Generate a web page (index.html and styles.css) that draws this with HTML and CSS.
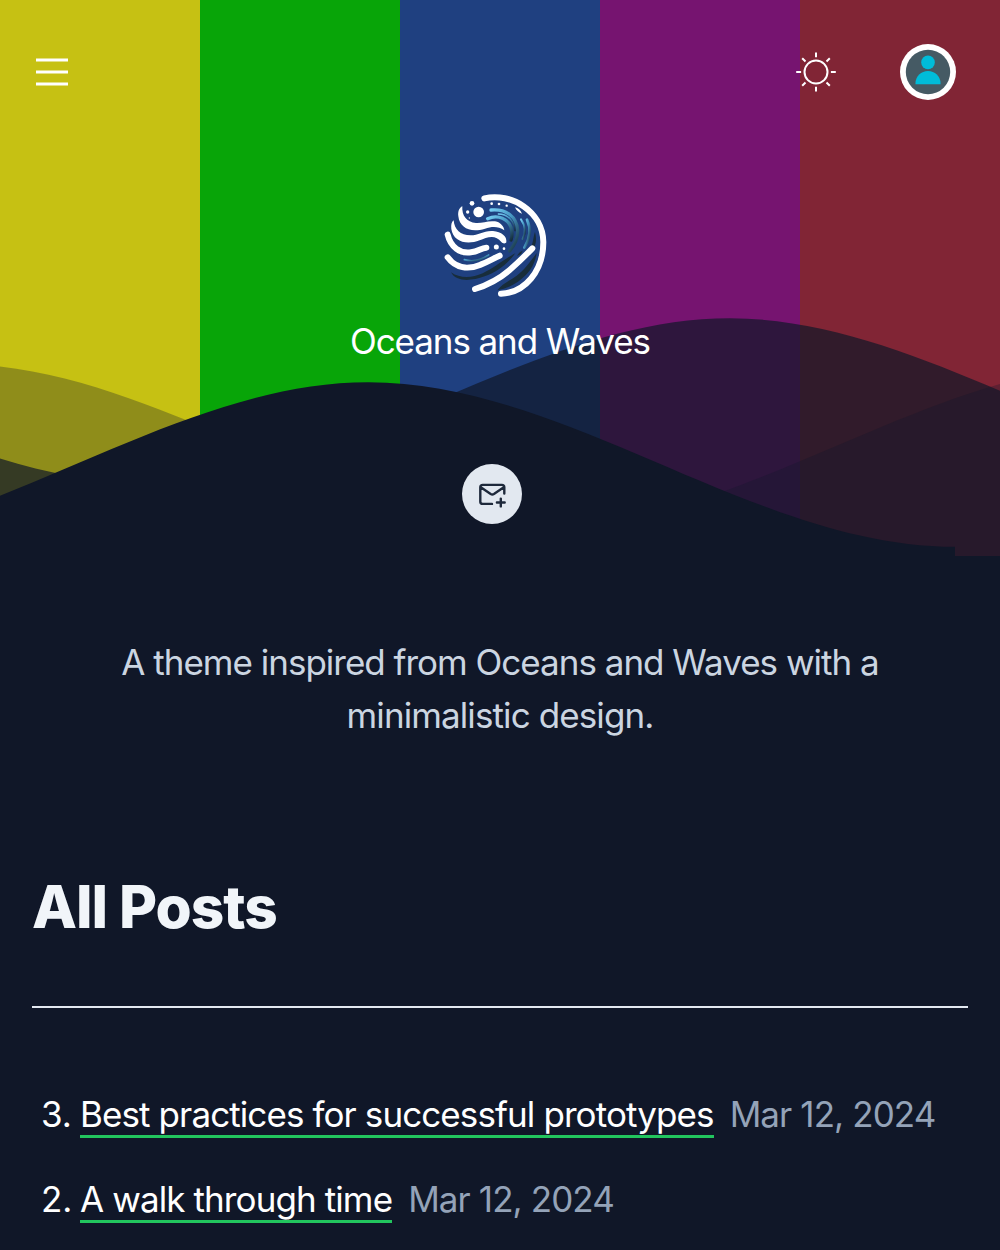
FILE: index.html
```html
<!DOCTYPE html>
<html lang="en">
<head>
<meta charset="utf-8">
<title>Oceans and Waves</title>
<link rel="stylesheet" href="styles.css">
</head>
<body>
<header class="hero">
  <svg class="waves" viewBox="0 24 150 28" preserveAspectRatio="none" aria-hidden="true">
    <defs><path id="wave" d="M-160 44c30 0 58-18 88-18s58 18 88 18 58-18 88-18 58 18 88 18v44h-352z"/></defs>
    <use href="#wave" x="5.5" y="0" opacity=".7"/>
    <use href="#wave" class="wave-light" x="65.3" y="5" opacity=".3"/>
    <use href="#wave" x="-48.75" y="7"/>
  </svg>
  <nav class="bar">
    <button class="icon-button" aria-label="Menu">
      <svg width="32" height="32" viewBox="0 0 32 32" fill="none" stroke="#fff" stroke-width="3"><path d="M0 4h32M0 16h32M0 28h32"/></svg>
    </button>
    <div class="actions">
      <button class="icon-button" aria-label="Theme">
        <svg width="40" height="40" viewBox="0 0 40 40" fill="none" stroke="#fff" stroke-width="2"><circle cx="20" cy="20" r="11.5"/><path d="M20 .5v4.7M20 34.8v4.7M.2 20h4.9M34.9 20h4.9M6.2 6.2l3.3 3.3M30.5 30.5l3.3 3.3M33.8 6.2l-3.3 3.3M9.5 30.5l-3.3 3.3"/></svg>
      </button>
      <button class="icon-button" aria-label="Account">
        <svg width="56" height="56" viewBox="0 0 56 56"><circle cx="28" cy="28" r="28" fill="#fff"/><circle cx="28" cy="28" r="22.2" fill="#455a64"/><circle cx="28" cy="18.4" r="6.8" fill="#00bcd9"/><path d="M15.5 40.3v-1.1a12.5 12.2 0 0 1 25 0v1.1z" fill="#00bcd9"/></svg>
      </button>
    </div>
  </nav>
  <div class="brand">
    <svg class="logo" width="120" height="120" viewBox="0 0 360 360" fill="none" stroke-linecap="round">
      <defs>
        <linearGradient id="sea" x1="0" x2="1" y1="0" y2="1"><stop offset="0" stop-color="#76cdf2"/><stop offset=".45" stop-color="#4798c4"/><stop offset="1" stop-color="#142c3a"/></linearGradient>
      </defs>
      <g fill="#182d3b">
        <path d="M48 262c28 20 64 17 95 3s65-43 98-60c-25 34-57 56-92 69-43 16-87 16-101-12z"/>
        <path d="M187 316c12-18 35-28 58-44 23-17 40-41 60-68-5 38-27 66-56 86-21 14-40 22-62 26z"/>
        <path d="M246 213c5-10 10-14 17-16l-5 10zM286 188c10-16 8-31 14-47 5 20 4 34-3 46z"/>
      </g>
      <g stroke="url(#sea)">
        <path stroke-width="10" d="M168 75c46-4 77 20 80 60 1 24-9 45-24 63"/>
        <path stroke-width="10" d="M158 101c32-14 62 2 70 26 4 13 4 26 0 38"/>
        <path stroke-width="4" d="M190 87c30 0 49 23 50 50"/>
        <path stroke-width="6" d="M258 103c14 20 15 40 5 59"/>
        <path stroke-width="8" d="M276 104c16 34 6 61-8 84"/>
        <path stroke-width="5" d="M88 224c27 8 52 0 73-14"/>
      </g>
      <g stroke="#fff" stroke-width="18">
        <path d="M148 40C229 21 324 80 325 171c0 89-57 153-127 155"/>
        <path d="M120 312c41-13 75-32 104-57 25-22 47-43 68-65"/>
        <path d="M38 217c24 33 61 38 99 22 23-9 39-19 57-27"/>
        <path d="M38 149c9 38 38 58 70 53 22-2 29-13 46-14"/>
      </g>
      <g fill="#fff">
        <path d="M82 64c-2 28 13 48 41 50 20 1 36-8 57-5 18 3 27 17 28 27-19-13-38-11-58-5-43 14-76-2-80-37-2-15 3-26 12-30z"/>
        <path d="M56 106c2 28 20 45 51 45 24 0 39-15 67-13 25 2 43 16 40 34-2 5-12 4-15-1-18-25-44-14-65-5-40 16-80 3-85-34-1-12 0-21 7-26z"/>
        <circle cx="131" cy="81" r="16"/><circle cx="111" cy="55" r="7"/><circle cx="98" cy="81" r="5"/><circle cx="184" cy="186" r="7.5"/><circle cx="207" cy="191" r="4"/><circle cx="170" cy="56" r="4"/><circle cx="192" cy="57" r="4"/><circle cx="215" cy="62" r="3.5"/><circle cx="103" cy="99" r="2"/>
        <path d="M240 67c9 1 17 9 21 19-9-3-17-9-21-19z"/>
      </g>
    </svg>
    <h1 class="site-title">Oceans and Waves</h1>
  </div>
  <button class="subscribe" aria-label="Subscribe">
    <svg width="32" height="32" viewBox="0 0 32 32" fill="none" stroke="#1e293b" stroke-width="2.4" stroke-linecap="round" stroke-linejoin="round"><path d="M28.3 15.5V9.3q0-2.4-2.4-2.4H6.8q-2.5 0-2.5 2.4v14.4q0 2.2 2.5 2.2H16M4.8 9.3l9.9 6.7q1.6 1 3.2 0l9.9-6.7M24.8 20.6v7.8M20.9 24.5h7.8"/></svg>
  </button>
</header>
<main>
  <p class="tagline">A theme inspired from Oceans and Waves with a<br><span class="tagline-end">minimalistic design.</span></p>
  <section class="posts">
    <h2 class="section-title">All Posts</h2>
    <ol class="post-list">
      <li class="post"><span class="number">3.</span><a class="post-link" href="#">Best practices for successful prototypes</a><time class="date">Mar 12, 2024</time></li>
      <li class="post"><span class="number">2.</span><a class="post-link" href="#">A walk through time</a><time class="date">Mar 12, 2024</time></li>
    </ol>
  </section>
</main>
</body>
</html>
```
FILE: styles.css
```css
* { box-sizing: border-box; }
body {
  margin: 0;
  height: 1250px;
  overflow: hidden;
  background: #101728;
  color: #fff;
  font-family: Inter, "Liberation Sans", sans-serif;
  font-size: 35px;
  letter-spacing: -0.9px;
}
button { border: 0; padding: 0; background: none; }
svg { display: block; }
.hero {
  position: relative;
  height: 556px;
  display: flex;
  flex-direction: column;
  background: linear-gradient(90deg, #c6c113 0 20%, #08a508 20% 40%, #1f4080 40% 60%, #761470 60% 80%, #812535 80%);
}
.waves {
  position: absolute;
  left: 0;
  bottom: 0;
  width: 100%;
  height: 256px;
  fill: #101728;
}
.wave-light { fill: #11172c; }
.bar {
  position: relative;
  height: 144px;
  padding: 0 44px 0 36px;
  display: flex;
  align-items: center;
  justify-content: space-between;
}
.actions { display: flex; align-items: center; gap: 64px; }
.brand {
  position: relative;
  display: flex;
  flex-direction: column;
  align-items: center;
  padding-top: 41px;
}
.logo { margin-right: 10px; }
.site-title {
  margin: 9px 0 0;
  font-size: 35px;
  font-weight: 400;
  line-height: 54px;
  letter-spacing: -1.1px;
}
.subscribe {
  position: relative;
  width: 60px;
  height: 60px;
  margin: 96px 0 0 462px;
  border-radius: 50%;
  background: #e2e8f0;
  display: grid;
  place-items: center;
}
.tagline {
  margin: 80px 0 0;
  text-align: center;
  line-height: 53px;
  letter-spacing: -1px;
  color: #cbd5e1;
}
.tagline-end { letter-spacing: -0.9px; }
.posts { padding: 0 32px; }
.section-title {
  margin: 125px 0 0;
  height: 141px;
  border-bottom: 2px solid #e2e8f0;
  font-size: 58.5px;
  line-height: 80px;
  font-weight: 800;
  letter-spacing: -1px;
  color: #f1f5f9;
}
.post-list {
  list-style: none;
  margin: 88px 0 0;
  padding: 0 0 0 9px;
  display: flex;
  flex-direction: column;
  gap: 43px;
}
.post { display: flex; height: 42px; line-height: 36px; white-space: nowrap; }
.number { flex: none; width: 39px; letter-spacing: 0; }
.post-link { color: #fff; text-decoration: none; border-bottom: 3px solid #22c55e; }
.date { margin-left: 16px; color: #94a3b8; }
```
